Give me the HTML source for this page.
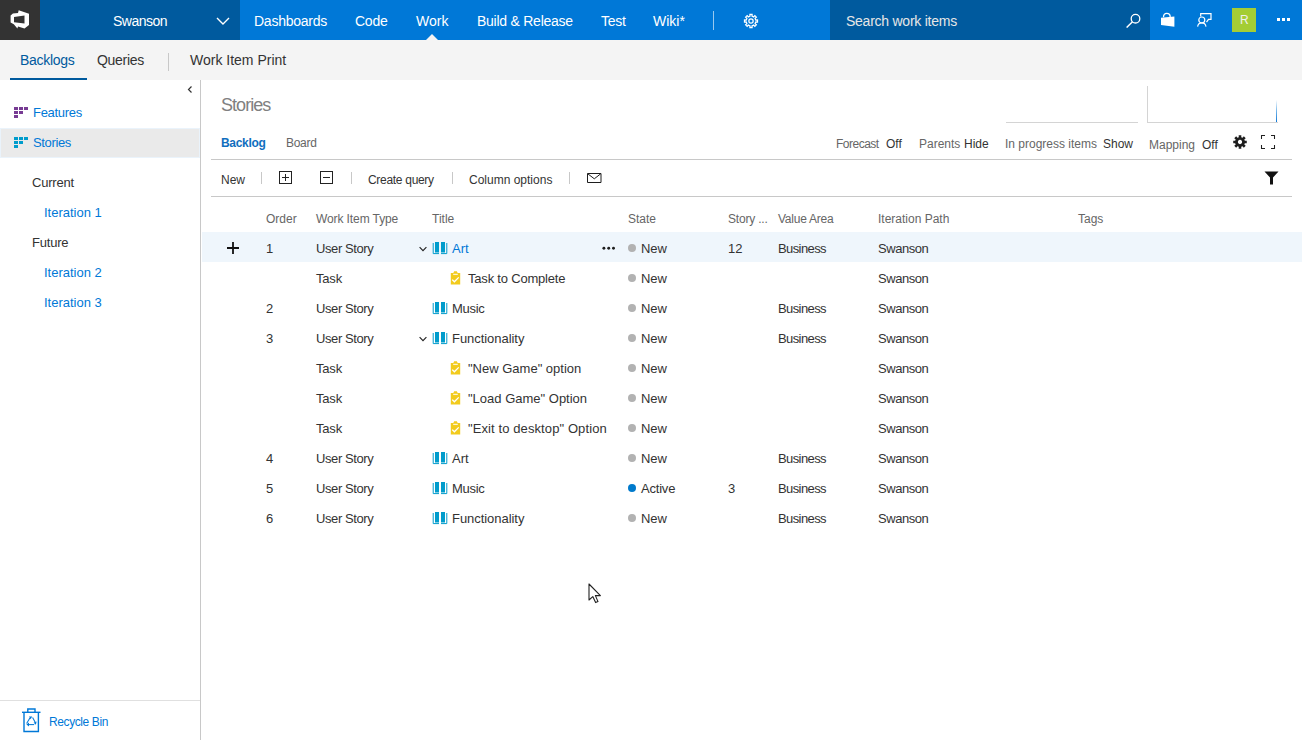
<!DOCTYPE html>
<html><head><meta charset="utf-8">
<style>
*{box-sizing:border-box;margin:0;padding:0}
html,body{width:1302px;height:740px;overflow:hidden;background:#fff;font-family:"Liberation Sans",sans-serif;color:#333}
.a{position:absolute;white-space:nowrap;line-height:1}
#hdr{position:absolute;left:0;top:0;width:1302px;height:40px;background:#0078d7}
#logo{position:absolute;left:0;top:0;width:40px;height:40px;background:#333}
#proj{position:absolute;left:40px;top:0;width:200px;height:40px;background:#005a9e}
#srch{position:absolute;left:830px;top:0;width:320px;height:40px;background:#005a9e}
.ht{position:absolute;top:14px;font-size:14px;color:#fff;line-height:1;letter-spacing:-0.25px}
#sub{position:absolute;left:0;top:40px;width:1302px;height:40px;background:#f4f4f4}
.st{position:absolute;top:13px;font-size:14px;color:#333;line-height:1;letter-spacing:-0.3px}
#left{position:absolute;left:0;top:80px;width:201px;height:660px;border-right:1px solid #c8c8c8;background:#fff}
.lt{position:absolute;font-size:13px;line-height:1;color:#333}
.lk{color:#0078d7}
.gh{position:absolute;top:213px;font-size:12px;color:#666;line-height:1}
.ic{position:absolute}
.c{position:absolute;white-space:nowrap;font-size:13px;line-height:1;color:#333}
</style></head>
<body>
<div id="hdr">
  <div id="logo">
    <svg width="40" height="40" viewBox="0 0 40 40" style="position:absolute;left:0;top:0">
      <path fill="#fff" fill-rule="evenodd" d="M18.7 10.3 L29 13.7 L29 25 L24.5 28.6 L18 26.4 L17.4 28.6 L13.8 24.2 L10.6 22.6 L10.6 15.5 L12.9 13.6 L18 12.9 Z M14 17 L24.5 15.4 L24.5 23.6 L14 22.3 Z"/>
    </svg>
  </div>
  <div id="proj">
    <div class="ht" style="left:73px;top:14px;letter-spacing:-0.5px">Swanson</div>
    <svg width="14" height="8" viewBox="0 0 14 8" style="position:absolute;left:176px;top:17px"><path d="M1 1 L7 7 L13 1" fill="none" stroke="#fff" stroke-width="1.4"/></svg>
  </div>
  <div class="ht" style="left:254px">Dashboards</div>
  <div class="ht" style="left:355px">Code</div>
  <div class="ht" style="left:416px;letter-spacing:0">Work</div>
  <svg width="12" height="6" style="position:absolute;left:426px;top:34px"><path d="M0 6 L6 0 L12 6 Z" fill="#f4f4f4"/></svg>
  <div class="ht" style="left:477px">Build &amp; Release</div>
  <div class="ht" style="left:601px">Test</div>
  <div class="ht" style="left:653px;letter-spacing:0">Wiki*</div>
  <div style="position:absolute;left:713px;top:11px;width:1px;height:19px;background:rgba(255,255,255,0.6)"></div>
  <svg width="18" height="18" viewBox="0 0 18 18" style="position:absolute;left:741.5px;top:12px"><path fill="none" stroke="#fff" stroke-width="1.25" stroke-linejoin="miter" d="M8.00 4.20 L7.92 2.49 L10.08 2.49 L10.00 4.20 L11.68 4.90 L12.84 3.63 L14.37 5.16 L13.10 6.32 L13.80 8.00 L15.51 7.92 L15.51 10.08 L13.80 10.00 L13.10 11.68 L14.37 12.84 L12.84 14.37 L11.68 13.10 L10.00 13.80 L10.08 15.51 L7.92 15.51 L8.00 13.80 L6.32 13.10 L5.16 14.37 L3.63 12.84 L4.90 11.68 L4.20 10.00 L2.49 10.08 L2.49 7.92 L4.20 8.00 L4.90 6.32 L3.63 5.16 L5.16 3.63 L6.32 4.90 Z"/><circle cx="9" cy="9" r="2.15" fill="none" stroke="#fff" stroke-width="1.25"/></svg>
  <div id="srch">
    <div class="ht" style="left:16px;color:#e6e6e6">Search work items</div>
    <svg width="18" height="18" viewBox="0 0 18 18" style="position:absolute;left:295px;top:10px">
      <circle cx="10.5" cy="8.7" r="4.3" fill="none" stroke="#fff" stroke-width="1.3"/>
      <path d="M7.5 11.8 L1.6 17.6" stroke="#fff" stroke-width="1.4"/>
    </svg>
  </div>
  <svg width="20" height="20" viewBox="0 0 20 20" style="position:absolute;left:1158px;top:10px">
    <path d="M5.5 7.2 Q5.5 3.3 8.8 3.3 Q12.2 3.3 12.2 7" fill="none" stroke="#fff" stroke-width="1.3"/>
    <path d="M3 7.8 L16.4 6.4 L16.4 16.7 L3 15 Z" fill="#fff"/>
  </svg>
  <svg width="20" height="20" viewBox="0 0 20 20" style="position:absolute;left:1195px;top:10px">
    <path d="M5.7 6.4 L5.7 3.7 L16 3.7 L16 9.4 L13.5 9.4 L11.5 12.2" fill="none" stroke="#fff" stroke-width="1.2"/>
    <circle cx="6.8" cy="10" r="3" fill="none" stroke="#fff" stroke-width="1.2"/>
    <path d="M2.6 16.6 Q3.2 12.8 6.8 12.8 Q10.4 12.8 11 16.6" fill="none" stroke="#fff" stroke-width="1.2"/>
  </svg>
  <div style="position:absolute;left:1232px;top:8px;width:24px;height:24px;background:#a4cd34"></div>
  <div class="ht" style="left:1240px;top:14px;font-size:12px;color:#f0f0f0;letter-spacing:0">R</div>
  <div style="position:absolute;left:1277px;top:18px;width:3px;height:3px;background:#fff"></div>
  <div style="position:absolute;left:1282px;top:18px;width:3px;height:3px;background:#fff"></div>
  <div style="position:absolute;left:1287px;top:18px;width:3px;height:3px;background:#fff"></div>
</div>

<div id="sub">
  <div class="st" style="left:20px;color:#005a9e">Backlogs</div>
  <div style="position:absolute;left:10px;top:38px;width:77px;height:2px;background:#005a9e"></div>
  <div class="st" style="left:97px">Queries</div>
  <div style="position:absolute;left:168px;top:13px;width:1px;height:18px;background:#c8c8c8"></div>
  <div class="st" style="left:190px;letter-spacing:0">Work Item Print</div>
</div>

<div id="left">
  <svg width="8" height="10" style="position:absolute;left:186px;top:5px"><path d="M5.5 1.5 L2.5 4.5 L5.5 7.5" fill="none" stroke="#333" stroke-width="1.2"/></svg>
  <div style="position:absolute;left:0;top:48px;width:200px;height:30px;background:#eaeaea;border:1px solid #eaf3fb"></div>
  <svg width="16" height="12" style="position:absolute;left:14px;top:27px">
    <g fill="#773b93"><rect x="0" y="0" width="4" height="3"/><rect x="5" y="0" width="4" height="3"/><rect x="10" y="0" width="4" height="3"/><rect x="0" y="4" width="4" height="3"/><rect x="5" y="4" width="4" height="3"/><rect x="0" y="8" width="4" height="3"/></g>
  </svg>
  <div class="lt lk" style="left:33px;top:26px;letter-spacing:-0.3px">Features</div>
  <svg width="16" height="12" style="position:absolute;left:14px;top:57px">
    <g fill="#009ccc"><rect x="0" y="0" width="4" height="3"/><rect x="5" y="0" width="4" height="3"/><rect x="10" y="0" width="4" height="3"/><rect x="0" y="4" width="4" height="3"/><rect x="5" y="4" width="4" height="3"/><rect x="0" y="8" width="4" height="3"/></g>
  </svg>
  <div class="lt lk" style="left:33px;top:56px;letter-spacing:-0.35px">Stories</div>
  <div class="lt" style="left:32px;top:96px;letter-spacing:-0.2px">Current</div>
  <div class="lt lk" style="left:44px;top:126px">Iteration 1</div>
  <div class="lt" style="left:32px;top:156px;letter-spacing:-0.2px">Future</div>
  <div class="lt lk" style="left:44px;top:186px">Iteration 2</div>
  <div class="lt lk" style="left:44px;top:216px">Iteration 3</div>
  <div style="position:absolute;left:0;top:620px;width:200px;height:1px;background:#e0e0e0"></div>
  <svg width="22" height="26" viewBox="0 0 22 26" style="position:absolute;left:20px;top:627px">
    <g fill="none" stroke="#0078d7" stroke-width="1.4">
      <path d="M2 5.3 L20.5 5.3"/>
      <path d="M7.8 5.3 L7.8 2 L15 2 L15 5.3"/>
      <path d="M4 5.3 L4 24.5 L18.4 24.5 L18.4 5.3"/>
    </g>
    <g fill="none" stroke="#0078d7" stroke-width="1.05">
      <path d="M6.6 16.4 L9.9 10.9"/>
      <path d="M12.6 10.6 L15.3 15.4"/>
      <path d="M14.2 17.6 L8.6 17.6"/>
    </g>
    <g fill="#0078d7">
      <path d="M9 9.6 L12.2 9.4 L10.6 12.2 Z"/>
      <path d="M16.6 14.6 L15.9 17.8 L13.6 15.8 Z"/>
      <path d="M6.4 17.6 L9 15.6 L9 19.4 Z"/>
    </g>
  </svg>
  <div class="lt lk" style="left:49px;top:636px;font-size:12px;color:#0078d7;letter-spacing:-0.4px">Recycle Bin</div>
</div>


<div id="main">
  <div class="a" style="left:221px;top:96px;font-size:18px;color:#808080;letter-spacing:-0.95px">Stories</div>
  <div class="a" style="left:221px;top:137px;font-size:12px;font-weight:bold;color:#106ebe;letter-spacing:-0.3px">Backlog</div>
  <div class="a" style="left:286px;top:137px;font-size:12px;color:#666;letter-spacing:-0.3px">Board</div>
  <div class="ic" style="left:1006px;top:122px;width:132px;height:1px;background:#d4d4d4"></div>
  <div class="ic" style="left:1147px;top:86px;width:1px;height:37px;background:#d4d4d4"></div>
  <div class="ic" style="left:1147px;top:122px;width:131px;height:1px;background:#d4d4d4"></div>
  <div class="ic" style="left:1276px;top:100px;width:1px;height:22px;background:linear-gradient(to bottom,rgba(0,120,215,0),rgba(0,120,215,0.5) 45%,#0f78d6)"></div>
  <div class="a" style="left:836px;top:138px;font-size:12px;color:#666;letter-spacing:-0.5px">Forecast</div>
  <div class="a" style="left:886px;top:138px;font-size:12px;color:#333">Off</div>
  <div class="a" style="left:919px;top:138px;font-size:12px;color:#666">Parents</div>
  <div class="a" style="left:964px;top:138px;font-size:12px;color:#333">Hide</div>
  <div class="a" style="left:1005px;top:138px;font-size:12px;color:#666">In progress items</div>
  <div class="a" style="left:1103px;top:138px;font-size:12px;color:#333">Show</div>
  <div class="a" style="left:1149px;top:139px;font-size:12px;color:#666">Mapping</div>
  <div class="a" style="left:1202px;top:139px;font-size:12px;color:#333">Off</div>
  <svg class="ic" width="16" height="16" viewBox="0 0 16 16" style="left:1232px;top:134px"><path fill="#1e1e1e" fill-rule="evenodd" d="M6.79 3.15 L6.65 1.23 L9.35 1.23 L9.21 3.15 L10.57 3.71 L11.83 2.26 L13.74 4.17 L12.29 5.43 L12.85 6.79 L14.77 6.65 L14.77 9.35 L12.85 9.21 L12.29 10.57 L13.74 11.83 L11.83 13.74 L10.57 12.29 L9.21 12.85 L9.35 14.77 L6.65 14.77 L6.79 12.85 L5.43 12.29 L4.17 13.74 L2.26 11.83 L3.71 10.57 L3.15 9.21 L1.23 9.35 L1.23 6.65 L3.15 6.79 L3.71 5.43 L2.26 4.17 L4.17 2.26 L5.43 3.71 Z M8 5.85 A2.15 2.15 0 1 1 7.99 5.85 Z"/></svg>
  <svg class="ic" width="16" height="16" viewBox="0 0 16 16" style="left:1260px;top:134px">
    <path d="M1.5 5 L1.5 1.5 L5 1.5 M11 1.5 L14.5 1.5 L14.5 5 M14.5 11 L14.5 14.5 L11 14.5 M5 14.5 L1.5 14.5 L1.5 11" fill="none" stroke="#222" stroke-width="1.05"/>
  </svg>
  <div class="ic" style="left:211px;top:159px;width:1081px;height:1px;background:#c8c8c8"></div>
  <div class="a" style="left:221px;top:174px;font-size:12px;color:#333">New</div>
  <div class="ic" style="left:261px;top:172px;width:1px;height:12px;background:#c8c8c8"></div>
  <div class="ic" style="left:279px;top:171px;width:13px;height:13px;border:1px solid #222"></div>
  <div class="ic" style="left:285px;top:174px;width:1px;height:7px;background:#222"></div>
  <div class="ic" style="left:282px;top:177px;width:7px;height:1px;background:#222"></div>
  <div class="ic" style="left:320px;top:171px;width:13px;height:13px;border:1px solid #222"></div>
  <div class="ic" style="left:323px;top:177px;width:7px;height:1px;background:#222"></div>
  <div class="ic" style="left:351px;top:172px;width:1px;height:12px;background:#c8c8c8"></div>
  <div class="a" style="left:368px;top:174px;font-size:12px;color:#333;letter-spacing:-0.3px">Create query</div>
  <div class="ic" style="left:452px;top:172px;width:1px;height:12px;background:#c8c8c8"></div>
  <div class="a" style="left:469px;top:174px;font-size:12px;color:#333">Column options</div>
  <div class="ic" style="left:569px;top:172px;width:1px;height:12px;background:#c8c8c8"></div>
  <svg class="ic" width="16" height="12" viewBox="0 0 16 12" style="left:586px;top:172px">
    <path d="M1.5 1.5 L15 1.5 L15 10.5 L1.5 10.5 Z M1.8 1.8 L8.3 6.8 L14.7 1.8" fill="none" stroke="#1e1e1e" stroke-width="1"/>
  </svg>
  <svg class="ic" width="16" height="14" viewBox="0 0 16 14" style="left:1264px;top:171px">
    <path d="M0.5 0.5 L14.5 0.5 L9 6.5 L9 13.5 L6 13.5 L6 6.5 Z" fill="#111"/>
  </svg>
  <div class="ic" style="left:211px;top:196px;width:1081px;height:1px;background:#c8c8c8"></div>
  
  <div class="gh" style="left:266px">Order</div>
  <div class="gh" style="left:316px;letter-spacing:-0.1px">Work Item Type</div>
  <div class="gh" style="left:432px">Title</div>
  <div class="gh" style="left:628px">State</div>
  <div class="gh" style="left:728px;letter-spacing:-0.2px">Story ...</div>
  <div class="gh" style="left:778px;letter-spacing:-0.25px">Value Area</div>
  <div class="gh" style="left:878px">Iteration Path</div>
  <div class="gh" style="left:1078px">Tags</div>
<div class="ic" style="left:202px;top:232px;width:1100px;height:30px;background:#eff6fc"></div>
<svg class="ic" width="14" height="14" viewBox="0 0 14 14" style="left:226px;top:241px"><path d="M7 1 L7 13 M1 7 L13 7" stroke="#111" stroke-width="1.8"/></svg>
<svg class="ic" width="16" height="6" viewBox="0 0 16 6" style="left:601px;top:245px"><g fill="#1e1e1e"><circle cx="2.9" cy="3.3" r="1.45"/><circle cx="7.7" cy="3.3" r="1.45"/><circle cx="12.5" cy="3.3" r="1.45"/></g></svg>
<div class="c" style="left:266px;top:242px;letter-spacing:0px">1</div>
<div class="c" style="left:316px;top:242px;letter-spacing:-0.4px">User Story</div>
<svg class="ic" width="10" height="6" viewBox="0 0 10 6" style="left:418px;top:246px"><path d="M1.6 1.2 L5 4.6 L8.4 1.2" fill="none" stroke="#222" stroke-width="1.15"/></svg>
<svg class="ic" width="16" height="14" viewBox="0 0 16 14" style="left:432px;top:242px"><g fill="#009ccc"><rect x="3" y="0" width="4" height="10.5"/><rect x="9" y="0" width="4" height="10.5"/></g><path d="M1.2 1 L1.2 11.6 L7 11.6 M9 11.6 L14.8 11.6 L14.8 1" fill="none" stroke="#009ccc" stroke-width="1"/></svg>
<div class="c" style="left:452px;top:242px;letter-spacing:0px;color:#0078d7">Art</div>
<div class="ic" style="left:628px;top:244px;width:8px;height:8px;border-radius:50%;background:#b2b2b2"></div>
<div class="c" style="left:641px;top:242px;letter-spacing:-0.1px">New</div>
<div class="c" style="left:728px;top:242px;letter-spacing:0px">12</div>
<div class="c" style="left:778px;top:242px;letter-spacing:-0.6px">Business</div>
<div class="c" style="left:878px;top:242px;letter-spacing:-0.45px">Swanson</div>
<div class="c" style="left:316px;top:272px;letter-spacing:-0.2px">Task</div>
<svg class="ic" width="12" height="16" viewBox="0 0 12 16" style="left:450px;top:271px"><path d="M0.8 2 L3.3 2 L4.2 0.2 L6.8 0.2 L7.7 2 L10.2 2 L10.2 13.6 L0.8 13.6 Z" fill="#f2cb1d"/><path d="M3.2 3.3 L7.8 3.3" stroke="#fff" stroke-width="1"/><path d="M2.2 8.6 L4.4 10.8 L8.7 6.4" fill="none" stroke="#fff" stroke-width="1.3"/></svg>
<div class="c" style="left:468px;top:272px;letter-spacing:-0.2px">Task to Complete</div>
<div class="ic" style="left:628px;top:274px;width:8px;height:8px;border-radius:50%;background:#b2b2b2"></div>
<div class="c" style="left:641px;top:272px;letter-spacing:-0.1px">New</div>
<div class="c" style="left:878px;top:272px;letter-spacing:-0.45px">Swanson</div>
<div class="c" style="left:266px;top:302px;letter-spacing:0px">2</div>
<div class="c" style="left:316px;top:302px;letter-spacing:-0.4px">User Story</div>
<svg class="ic" width="16" height="14" viewBox="0 0 16 14" style="left:432px;top:302px"><g fill="#009ccc"><rect x="3" y="0" width="4" height="10.5"/><rect x="9" y="0" width="4" height="10.5"/></g><path d="M1.2 1 L1.2 11.6 L7 11.6 M9 11.6 L14.8 11.6 L14.8 1" fill="none" stroke="#009ccc" stroke-width="1"/></svg>
<div class="c" style="left:452px;top:302px;letter-spacing:-0.3px">Music</div>
<div class="ic" style="left:628px;top:304px;width:8px;height:8px;border-radius:50%;background:#b2b2b2"></div>
<div class="c" style="left:641px;top:302px;letter-spacing:-0.1px">New</div>
<div class="c" style="left:778px;top:302px;letter-spacing:-0.6px">Business</div>
<div class="c" style="left:878px;top:302px;letter-spacing:-0.45px">Swanson</div>
<div class="c" style="left:266px;top:332px;letter-spacing:0px">3</div>
<div class="c" style="left:316px;top:332px;letter-spacing:-0.4px">User Story</div>
<svg class="ic" width="10" height="6" viewBox="0 0 10 6" style="left:418px;top:336px"><path d="M1.6 1.2 L5 4.6 L8.4 1.2" fill="none" stroke="#222" stroke-width="1.15"/></svg>
<svg class="ic" width="16" height="14" viewBox="0 0 16 14" style="left:432px;top:332px"><g fill="#009ccc"><rect x="3" y="0" width="4" height="10.5"/><rect x="9" y="0" width="4" height="10.5"/></g><path d="M1.2 1 L1.2 11.6 L7 11.6 M9 11.6 L14.8 11.6 L14.8 1" fill="none" stroke="#009ccc" stroke-width="1"/></svg>
<div class="c" style="left:452px;top:332px;letter-spacing:-0.05px">Functionality</div>
<div class="ic" style="left:628px;top:334px;width:8px;height:8px;border-radius:50%;background:#b2b2b2"></div>
<div class="c" style="left:641px;top:332px;letter-spacing:-0.1px">New</div>
<div class="c" style="left:778px;top:332px;letter-spacing:-0.6px">Business</div>
<div class="c" style="left:878px;top:332px;letter-spacing:-0.45px">Swanson</div>
<div class="c" style="left:316px;top:362px;letter-spacing:-0.2px">Task</div>
<svg class="ic" width="12" height="16" viewBox="0 0 12 16" style="left:450px;top:361px"><path d="M0.8 2 L3.3 2 L4.2 0.2 L6.8 0.2 L7.7 2 L10.2 2 L10.2 13.6 L0.8 13.6 Z" fill="#f2cb1d"/><path d="M3.2 3.3 L7.8 3.3" stroke="#fff" stroke-width="1"/><path d="M2.2 8.6 L4.4 10.8 L8.7 6.4" fill="none" stroke="#fff" stroke-width="1.3"/></svg>
<div class="c" style="left:468px;top:362px;letter-spacing:0px">&quot;New Game&quot; option</div>
<div class="ic" style="left:628px;top:364px;width:8px;height:8px;border-radius:50%;background:#b2b2b2"></div>
<div class="c" style="left:641px;top:362px;letter-spacing:-0.1px">New</div>
<div class="c" style="left:878px;top:362px;letter-spacing:-0.45px">Swanson</div>
<div class="c" style="left:316px;top:392px;letter-spacing:-0.2px">Task</div>
<svg class="ic" width="12" height="16" viewBox="0 0 12 16" style="left:450px;top:391px"><path d="M0.8 2 L3.3 2 L4.2 0.2 L6.8 0.2 L7.7 2 L10.2 2 L10.2 13.6 L0.8 13.6 Z" fill="#f2cb1d"/><path d="M3.2 3.3 L7.8 3.3" stroke="#fff" stroke-width="1"/><path d="M2.2 8.6 L4.4 10.8 L8.7 6.4" fill="none" stroke="#fff" stroke-width="1.3"/></svg>
<div class="c" style="left:468px;top:392px;letter-spacing:0px">&quot;Load Game&quot; Option</div>
<div class="ic" style="left:628px;top:394px;width:8px;height:8px;border-radius:50%;background:#b2b2b2"></div>
<div class="c" style="left:641px;top:392px;letter-spacing:-0.1px">New</div>
<div class="c" style="left:878px;top:392px;letter-spacing:-0.45px">Swanson</div>
<div class="c" style="left:316px;top:422px;letter-spacing:-0.2px">Task</div>
<svg class="ic" width="12" height="16" viewBox="0 0 12 16" style="left:450px;top:421px"><path d="M0.8 2 L3.3 2 L4.2 0.2 L6.8 0.2 L7.7 2 L10.2 2 L10.2 13.6 L0.8 13.6 Z" fill="#f2cb1d"/><path d="M3.2 3.3 L7.8 3.3" stroke="#fff" stroke-width="1"/><path d="M2.2 8.6 L4.4 10.8 L8.7 6.4" fill="none" stroke="#fff" stroke-width="1.3"/></svg>
<div class="c" style="left:468px;top:422px;letter-spacing:0.1px">&quot;Exit to desktop&quot; Option</div>
<div class="ic" style="left:628px;top:424px;width:8px;height:8px;border-radius:50%;background:#b2b2b2"></div>
<div class="c" style="left:641px;top:422px;letter-spacing:-0.1px">New</div>
<div class="c" style="left:878px;top:422px;letter-spacing:-0.45px">Swanson</div>
<div class="c" style="left:266px;top:452px;letter-spacing:0px">4</div>
<div class="c" style="left:316px;top:452px;letter-spacing:-0.4px">User Story</div>
<svg class="ic" width="16" height="14" viewBox="0 0 16 14" style="left:432px;top:452px"><g fill="#009ccc"><rect x="3" y="0" width="4" height="10.5"/><rect x="9" y="0" width="4" height="10.5"/></g><path d="M1.2 1 L1.2 11.6 L7 11.6 M9 11.6 L14.8 11.6 L14.8 1" fill="none" stroke="#009ccc" stroke-width="1"/></svg>
<div class="c" style="left:452px;top:452px;letter-spacing:0px">Art</div>
<div class="ic" style="left:628px;top:454px;width:8px;height:8px;border-radius:50%;background:#b2b2b2"></div>
<div class="c" style="left:641px;top:452px;letter-spacing:-0.1px">New</div>
<div class="c" style="left:778px;top:452px;letter-spacing:-0.6px">Business</div>
<div class="c" style="left:878px;top:452px;letter-spacing:-0.45px">Swanson</div>
<div class="c" style="left:266px;top:482px;letter-spacing:0px">5</div>
<div class="c" style="left:316px;top:482px;letter-spacing:-0.4px">User Story</div>
<svg class="ic" width="16" height="14" viewBox="0 0 16 14" style="left:432px;top:482px"><g fill="#009ccc"><rect x="3" y="0" width="4" height="10.5"/><rect x="9" y="0" width="4" height="10.5"/></g><path d="M1.2 1 L1.2 11.6 L7 11.6 M9 11.6 L14.8 11.6 L14.8 1" fill="none" stroke="#009ccc" stroke-width="1"/></svg>
<div class="c" style="left:452px;top:482px;letter-spacing:-0.3px">Music</div>
<div class="ic" style="left:628px;top:484px;width:8px;height:8px;border-radius:50%;background:#007acc"></div>
<div class="c" style="left:641px;top:482px;letter-spacing:-0.2px">Active</div>
<div class="c" style="left:728px;top:482px;letter-spacing:0px">3</div>
<div class="c" style="left:778px;top:482px;letter-spacing:-0.6px">Business</div>
<div class="c" style="left:878px;top:482px;letter-spacing:-0.45px">Swanson</div>
<div class="c" style="left:266px;top:512px;letter-spacing:0px">6</div>
<div class="c" style="left:316px;top:512px;letter-spacing:-0.4px">User Story</div>
<svg class="ic" width="16" height="14" viewBox="0 0 16 14" style="left:432px;top:512px"><g fill="#009ccc"><rect x="3" y="0" width="4" height="10.5"/><rect x="9" y="0" width="4" height="10.5"/></g><path d="M1.2 1 L1.2 11.6 L7 11.6 M9 11.6 L14.8 11.6 L14.8 1" fill="none" stroke="#009ccc" stroke-width="1"/></svg>
<div class="c" style="left:452px;top:512px;letter-spacing:-0.05px">Functionality</div>
<div class="ic" style="left:628px;top:514px;width:8px;height:8px;border-radius:50%;background:#b2b2b2"></div>
<div class="c" style="left:641px;top:512px;letter-spacing:-0.1px">New</div>
<div class="c" style="left:778px;top:512px;letter-spacing:-0.6px">Business</div>
<div class="c" style="left:878px;top:512px;letter-spacing:-0.45px">Swanson</div>
  <svg class="ic" width="16" height="22" viewBox="0 0 16 22" style="left:588px;top:583px">
    <path d="M1 1 L1 17 L4.8 13.6 L7.6 19.6 L10 18.6 L7.4 12.6 L12.4 12.6 Z" fill="#fff" stroke="#222" stroke-width="1.1" stroke-linejoin="round"/>
  </svg>
</div>
</body></html>
